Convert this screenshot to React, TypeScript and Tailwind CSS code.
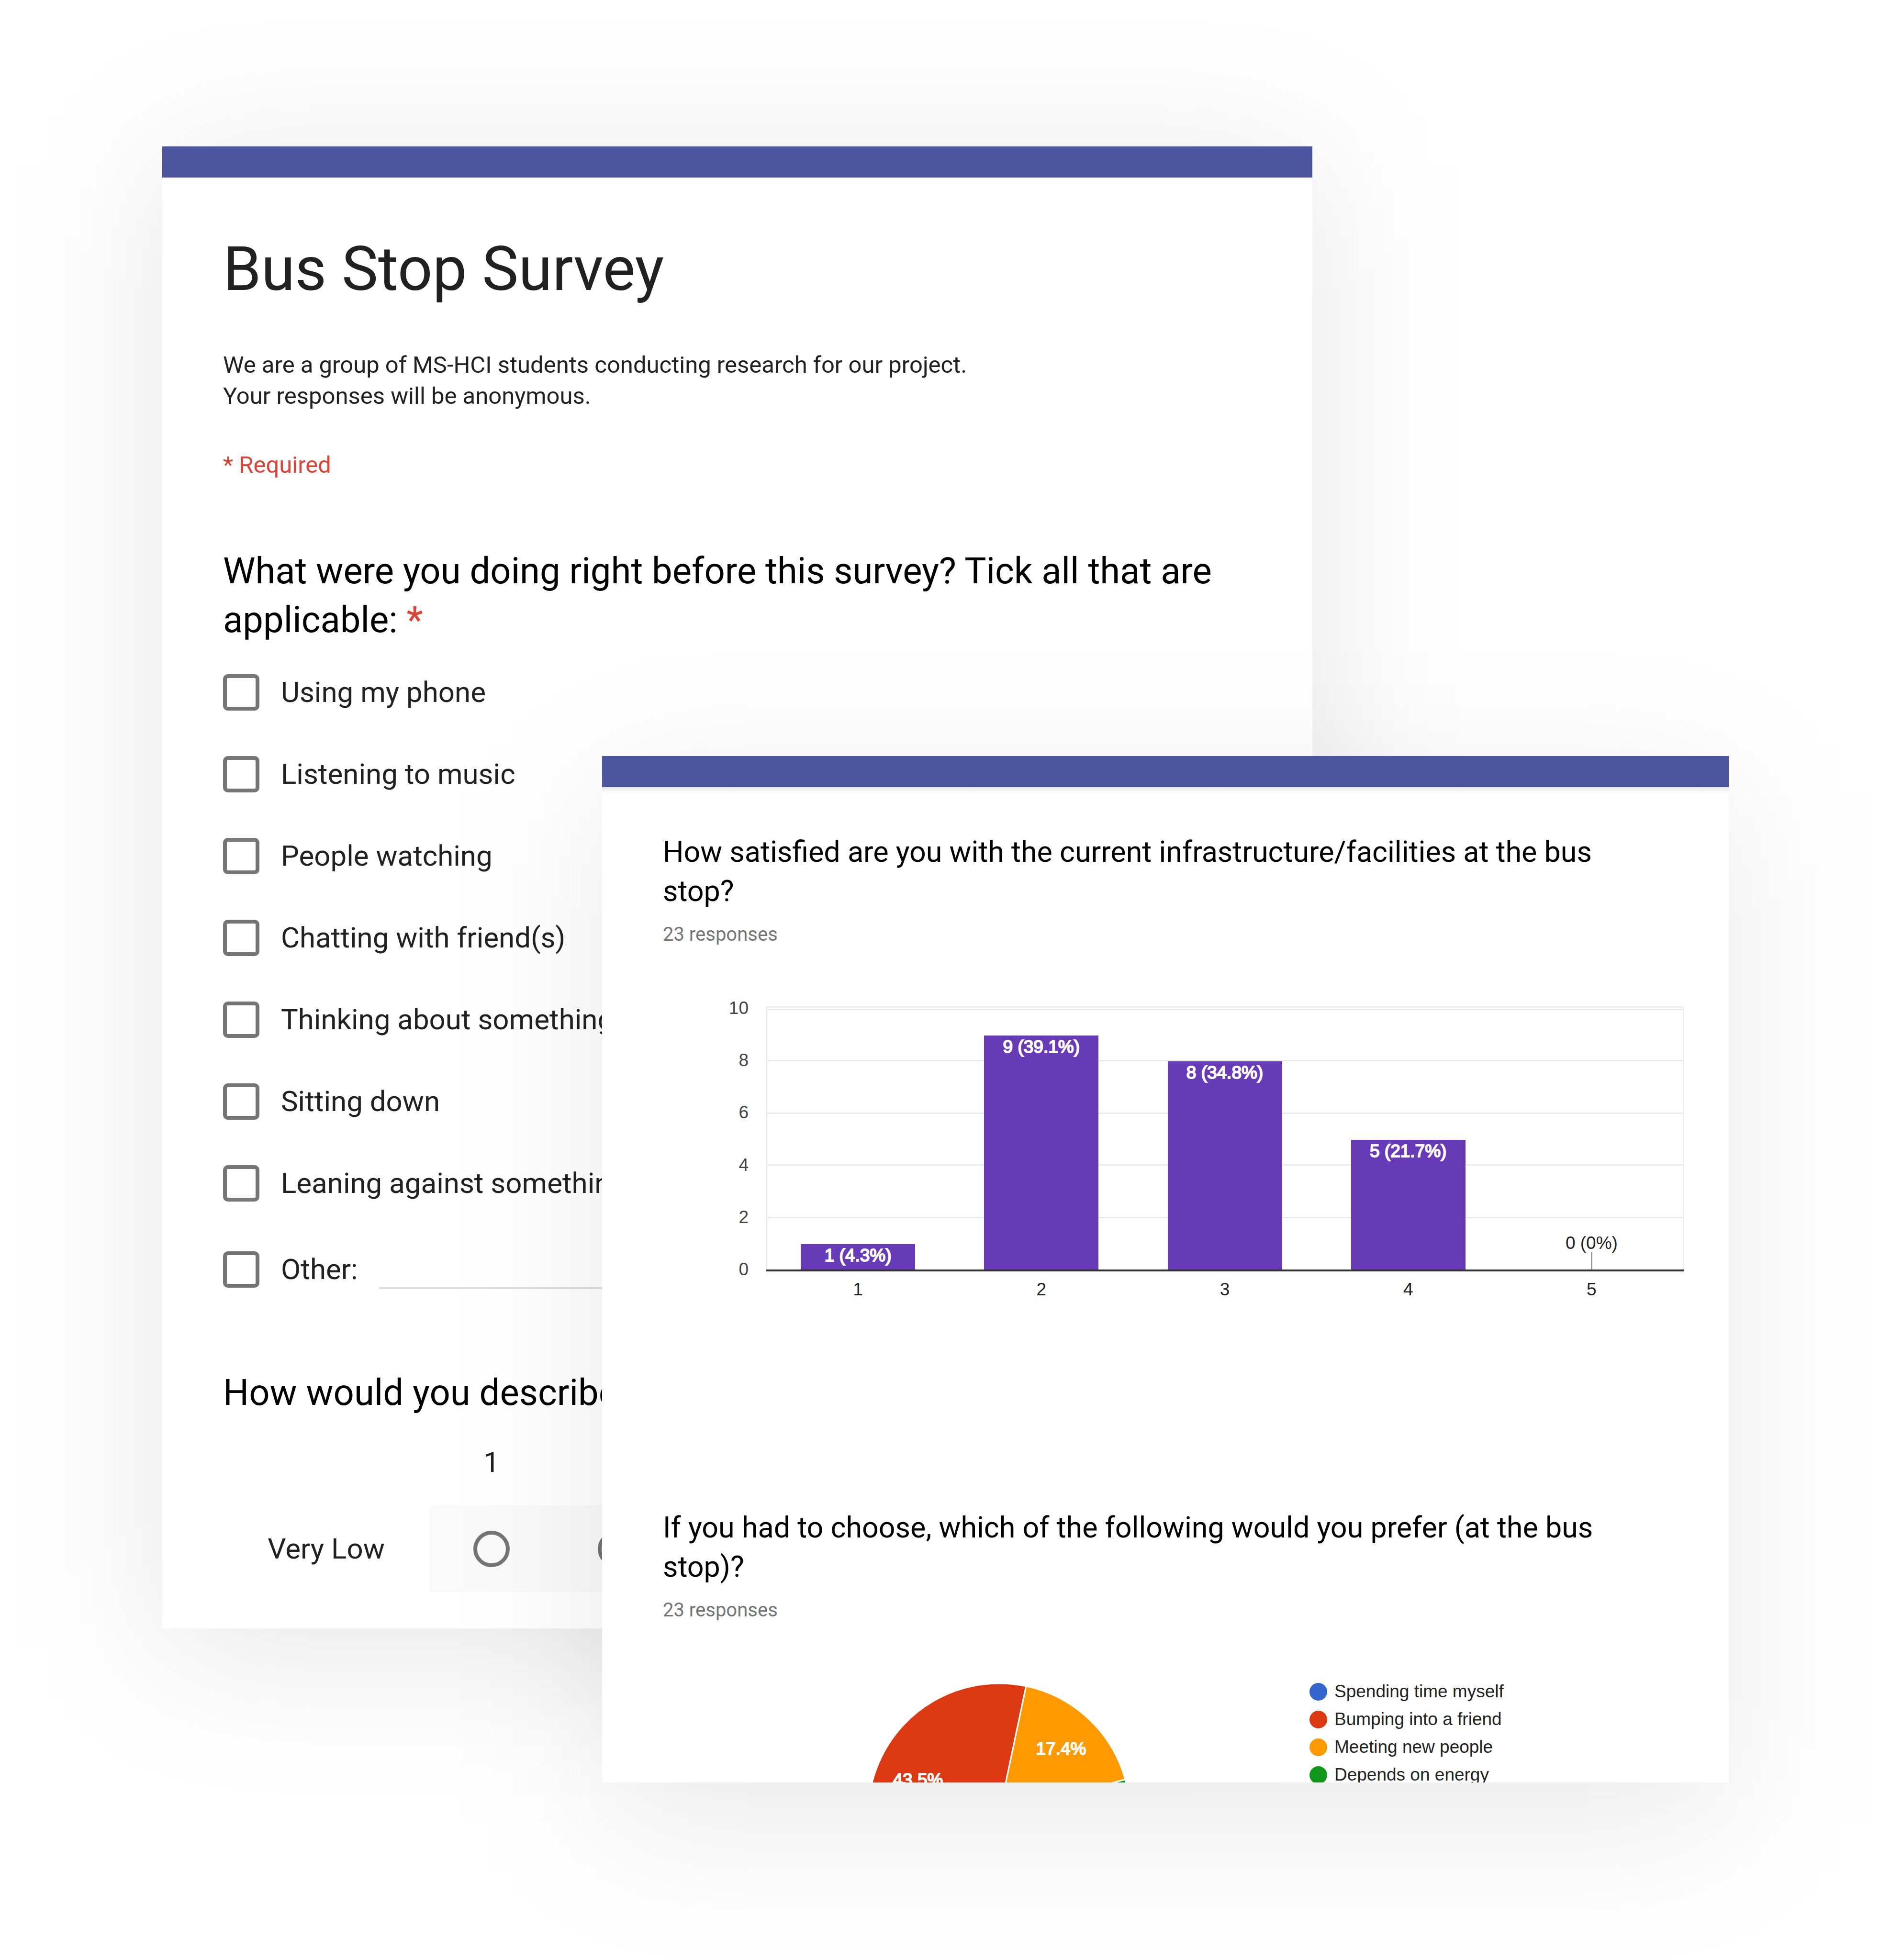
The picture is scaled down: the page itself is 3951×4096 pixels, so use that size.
import React from "react";

const ACTIVITIES = [
  "Using my phone",
  "Listening to music",
  "People watching",
  "Chatting with friend(s)",
  "Thinking about something",
  "Sitting down",
  "Leaning against something",
];

const SCALE = [1, 2, 3, 4, 5];

const BARS = [
  { category: "1", value: 1, label: "1 (4.3%)" },
  { category: "2", value: 9, label: "9 (39.1%)" },
  { category: "3", value: 8, label: "8 (34.8%)" },
  { category: "4", value: 5, label: "5 (21.7%)" },
  { category: "5", value: 0, label: "0 (0%)" },
];

const LEGEND = [
  { label: "Spending time myself", dot: "bg-[#3366cc]" },
  { label: "Bumping into a friend", dot: "bg-[#dc3912]" },
  { label: "Meeting new people", dot: "bg-[#ff9900]" },
  { label: "Depends on energy", dot: "bg-[#109618]" },
];

const CHECKBOX =
  "size-[76px] shrink-0 appearance-none rounded-[10px] border-8 border-[#757575] bg-white checked:bg-[#4c569e]";
const RADIO =
  "size-[76px] appearance-none rounded-full border-8 border-[#757575] checked:bg-[#4c569e]";

function Activity({ label }: { label: string }) {
  return (
    <label className="flex h-[171px] items-center gap-[45px]">
      <input type="checkbox" name="activity" className="size-[76px] shrink-0 appearance-none rounded-[10px] border-8 border-[#757575] checked:bg-[#4c569e]" />
      <span>{label}</span>
    </label>
  );
}

function SurveyForm() {
  return (
    <div className="relative col-start-1 row-start-1 mt-[306px] ml-[8.58%] w-[60.82%] self-start">
      <div className="absolute inset-x-0 top-10 -bottom-10 bg-black/10 blur-[160px]" />
      <form className="relative bg-white text-[#212121]">
        <div className="h-[65px] bg-[#4c569e]" />
        <div className="px-[127px] pt-[115px] pb-[76px]">
          <h1 className="text-[128px] leading-[152px]">Bus Stop Survey</h1>
          <p className="mt-[92px] text-[49px] leading-[65px]">
            We are a group of MS-HCI students conducting research for our project.
            <br />
            Your responses will be anonymous.
          </p>
          <p className="mt-[79px] text-[49px] leading-[65px] text-[#db4437]">* Required</p>

          <fieldset className="mt-[138px] text-[60px] leading-[80px]">
            <legend className="text-[76px] leading-[102px] text-black">
              What were you doing right before this survey? Tick all that are applicable:{" "}
              <span className="font-medium text-[#db4437]">*</span>
            </legend>
            <div className="mt-[15px]">
              {ACTIVITIES.map((label) => (
                <Activity key={label} label={label} />
              ))}
            </div>
            <div className="mt-[9px] flex h-[171px] items-center">
              <label className="flex w-[326px] shrink-0 items-center gap-[45px]">
                <input type="checkbox" name="activity" className={CHECKBOX} />
                <span>Other:</span>
              </label>
              <input
                type="text"
                aria-label="Other activity"
                className="h-[82px] min-w-0 flex-1 border-b-4 border-[#dedede] bg-transparent outline-none"
              />
            </div>
          </fieldset>

          <fieldset className="mt-[121px] text-[60px] leading-[80px]">
            <legend className="text-[76px] leading-[102px] text-black">How would you describe</legend>
            <div className="flex pt-[55px] pb-[50px]">
              <span className="w-[431px] shrink-0" />
              {SCALE.map((n) => (
                <label key={n} htmlFor={`level-${n}`} className="w-[260px] text-center">
                  {n}
                </label>
              ))}
            </div>
            <div className="flex h-[181px] items-center">
              <span className="w-[431px] shrink-0 text-center">Very Low</span>
              <div className="flex h-full items-center bg-[#fafafa]">
                {SCALE.map((n) => (
                  <div key={n} className="flex w-[260px] justify-center">
                    <input type="radio" id={`level-${n}`} name="level" className={RADIO} />
                  </div>
                ))}
              </div>
            </div>
          </fieldset>
        </div>
      </form>
    </div>
  );
}

function BarChart() {
  const left = 343;
  const right = 2259;
  const base = 577;
  const unit = 54.6;
  const band = (right - left) / BARS.length;
  const barWidth = 239;
  const gridLines = [26, 31, 138, 248, 356, 466];
  return (
    <svg
      viewBox="0 0 2354 660"
      className="mt-[100px] block w-full font-['Liberation_Sans',Arial,sans-serif] text-[37px]"
      role="img"
      aria-label="Satisfaction ratings from 1 to 5"
    >
      <g fill="#ebebeb">
        {gridLines.map((y) => (
          <rect key={y} x={left} y={y} width={right - left} height="3" />
        ))}
        <rect x={left - 1} y="26" width="3" height={base - 26} />
        <rect x={right - 1} y="26" width="2" height={base - 26} />
      </g>
      {[0, 2, 4, 6, 8, 10].map((v) => (
        <text key={v} x="306" y={Math.round(base - v * unit) + 11} textAnchor="end" fill="#444444">
          {v}
        </text>
      ))}
      {BARS.map((bar, i) => {
        const centre = left + band * (i + 0.5);
        const top = base - bar.value * unit + 1;
        return (
          <g key={bar.category} textAnchor="middle">
            {bar.value > 0 ? (
              <>
                <rect
                  x={Math.round(centre - barWidth / 2)}
                  y={Math.round(top)}
                  width={barWidth}
                  height={base - Math.round(top)}
                  fill="#673ab7"
                />
                <text x={centre} y={top + 36} fill="#ffffff" stroke="#ffffff" strokeWidth="2">
                  {bar.label}
                </text>
              </>
            ) : (
              <>
                <rect x={Math.round(centre) - 1} y="539" width="3" height="38" fill="#999999" />
                <text x={centre} y="533" fill="#222222">
                  {bar.label}
                </text>
              </>
            )}
            <text x={centre} y="630" fill="#222222">
              {bar.category}
            </text>
          </g>
        );
      })}
      <rect x={left} y={base - 1} width={right - left + 1} height="4" fill="#333333" />
    </svg>
  );
}

function slicePath(from: number, to: number, r: number) {
  const point = (deg: number) => {
    const a = (deg * Math.PI) / 180;
    return `${(r + r * Math.sin(a)).toFixed(2)} ${(r - r * Math.cos(a)).toFixed(2)}`;
  };
  return `M${r} ${r}L${point(from)}A${r} ${r} 0 ${to - from > 180 ? 1 : 0} 1 ${point(to)}Z`;
}

function PieChart() {
  return (
    <svg
      viewBox="0 0 547 547"
      className="mt-[12px] w-[547px] shrink-0 self-start font-['Liberation_Sans',Arial,sans-serif] text-[37px]"
      role="img"
      aria-label="Preferred way to wait at the bus stop"
    >
      <g stroke="#ffffff" strokeWidth="3">
        <path d={slicePath(74.5, 136, 273.5)} fill="#109618" />
        <path d={slicePath(136, 215.3, 273.5)} fill="#3366cc" />
        <path d={slicePath(215.3, 371.9, 273.5)} fill="#dc3912" />
        <path d={slicePath(11.9, 74.5, 273.5)} fill="#ff9900" />
      </g>
      <g fill="#ffffff" stroke="#ffffff" strokeWidth="2" textAnchor="middle">
        <text x="403" y="149">
          17.4%
        </text>
        <text x="104" y="214">
          43.5%
        </text>
      </g>
    </svg>
  );
}

function Results() {
  return (
    <div className="relative z-10 col-start-1 row-start-1 mt-[1580px] ml-[31.84%] w-[59.58%] self-start">
      <div className="absolute inset-x-0 top-20 -bottom-20 bg-black/[0.085] blur-[160px]" />
      <section className="relative bg-white text-black">
        <div className="h-[65px] bg-[#4c569e]" />
        <div className="h-[14px] bg-linear-to-b from-[#e9e9e9] to-white" />
        <div className="pt-[80px] pr-[230px] pl-[127px]">
          <h2 className="text-[61px] leading-[82px]">
            How satisfied are you with the current infrastructure/facilities at the bus stop?
          </h2>
          <p className="mt-[26px] text-[40px] leading-[48px] text-[#757575]">23 responses</p>
        </div>
        <BarChart />
        <div className="pt-[414px] pr-[230px] pl-[127px]">
          <h2 className="text-[61px] leading-[82px]">
            If you had to choose, which of the following would you prefer (at the bus stop)?
          </h2>
          <p className="mt-[26px] text-[40px] leading-[48px] text-[#757575]">23 responses</p>
        </div>
        <div className="mt-[117px] flex h-[219px] overflow-hidden pl-[23.62%]">
          <PieChart />
          <ul className="ml-[375px] font-['Liberation_Sans',Arial,sans-serif] text-[37px] text-[#222222]">
            {LEGEND.map((item) => (
              <li key={item.label} className="flex h-[58px] items-center gap-[15px] whitespace-nowrap">
                <span className={`size-[37px] rounded-full ${item.dot}`} />
                {item.label}
              </li>
            ))}
          </ul>
        </div>
      </section>
    </div>
  );
}

export default function App() {
  return (
    <main className="grid min-h-screen grid-cols-1 overflow-hidden bg-white font-[Roboto,sans-serif]">
      <SurveyForm />
      <Results />
    </main>
  );
}
